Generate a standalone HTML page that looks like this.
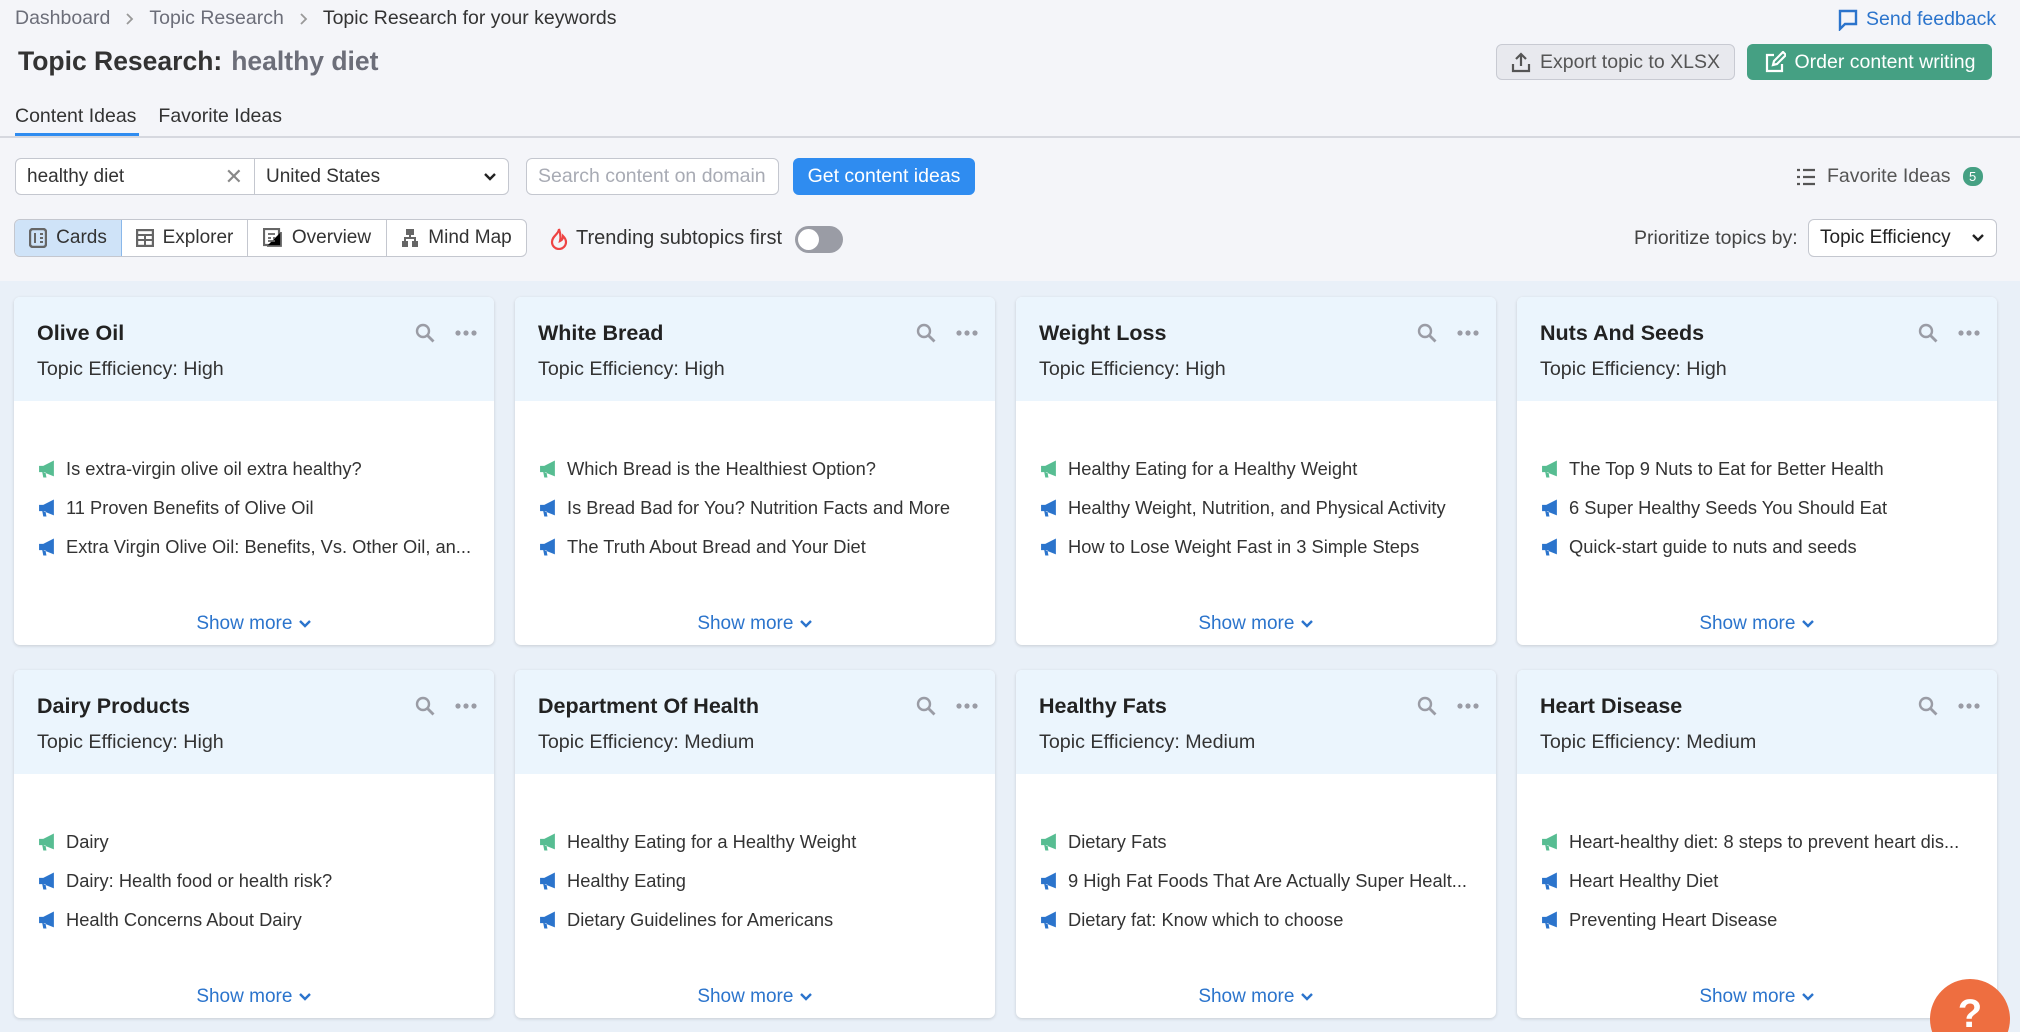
<!DOCTYPE html>
<html><head><meta charset="utf-8"><style>
*{box-sizing:border-box;margin:0;padding:0}
html,body{width:2020px;height:1032px;overflow:hidden}
body{background:#f4f5f9;font-family:"Liberation Sans",sans-serif;color:#333;position:relative}
.a{position:absolute}
.bc{top:7px;left:15px;font-size:19.5px;color:#6c6e79;white-space:nowrap;display:flex;align-items:center}
.bc b{font-weight:normal;color:#333}
.bc i{margin:0 15px;display:inline-flex}
h1{position:absolute;left:18px;top:46px;font-size:26.5px;font-weight:bold;color:#333;white-space:nowrap}
h1 span{color:#6c6e79;margin-left:9px}
.btn{position:absolute;border-radius:6px;font-size:19.5px;display:flex;align-items:center;justify-content:center;gap:9px}
.tabs{top:105px;left:15px;font-size:19.5px}
.line{top:136px;left:0;width:2020px;height:2px;background:#d6d8df}
.ul{top:133px;left:15px;width:124px;height:3px;background:#2f8cf0}
.inp{position:absolute;background:#fff;border:1px solid #c4c7cf;height:37px;top:158px;font-size:19px;display:flex;align-items:center;padding:0 11px}
.seg{position:absolute;top:219px;left:14px;height:38px;width:513px;border:1px solid #c4c7cf;border-radius:6px;background:#fff;display:flex;overflow:hidden;font-size:19px}
.seg div{display:flex;align-items:center;justify-content:center;gap:9px;border-right:1px solid #c4c7cf}
.seg div:last-child{border:none}
.band{top:281px;left:0;width:2020px;height:751px;background:#e9f0f8;overflow:hidden}
.card{position:absolute;width:480px;height:348px;background:#fff;border-radius:6px;box-shadow:0 1px 3px rgba(0,0,0,.15);overflow:hidden}
.hd{height:104px;background:#ebf5fd;position:relative;padding:24px 0 0 23px}
.hd h3{font-size:21.5px;font-weight:bold;color:#222}
.hd p{font-size:19.7px;margin-top:12px;color:#333}
.ic{position:absolute;top:26px;right:17px;display:flex;gap:20px;align-items:center}
.items{padding:48px 0 0 24px}
.it{display:flex;align-items:center;font-size:18.3px;color:#333;height:39px;white-space:nowrap}
.it svg{margin-right:10px;flex:none}
.sm{position:absolute;bottom:10px;left:0;width:100%;text-align:center;font-size:19px;color:#2b74cc}
</style></head><body>
<div class="a bc">Dashboard<i><svg width="9" height="14" viewBox="0 0 9 14"><path d="M2 2l5 5-5 5" fill="none" stroke="#999" stroke-width="1.8"/></svg></i>Topic Research<i><svg width="9" height="14" viewBox="0 0 9 14"><path d="M2 2l5 5-5 5" fill="none" stroke="#999" stroke-width="1.8"/></svg></i><b>Topic Research for your keywords</b></div>
<div class="a" style="top:8px;left:1838px;font-size:19.5px;color:#2b74cc;display:flex;align-items:center;gap:8px"><svg width="20" height="22" viewBox="0 0 20 22"><path d="M2 2h16v13H7l-5 5z" fill="none" stroke="#2b74cc" stroke-width="2.4"/></svg>Send feedback</div>
<h1>Topic Research:<span>healthy diet</span></h1>
<div class="btn" style="left:1496px;top:44px;width:239px;height:36px;background:#e8e9ee;border:1px solid #c8cad2;color:#555"><svg width="20" height="22" viewBox="0 0 20 22"><path d="M10 15V3M5 8l5-5 5 5M2 13v7h16v-7" fill="none" stroke="#555" stroke-width="2.2"/></svg>Export topic to XLSX</div>
<div class="btn" style="left:1747px;top:44px;width:245px;height:36px;background:#45a083;color:#fff"><svg width="22" height="22" viewBox="0 0 22 22"><path d="M10 4H3v16h15v-7M9 14l1-4 9-9 3 3-9 9z" fill="none" stroke="#fff" stroke-width="2.2"/></svg>Order content writing</div>
<div class="a tabs">Content Ideas<span style="margin-left:22px">Favorite Ideas</span></div>
<div class="a line"></div><div class="a ul"></div>
<div class="inp" style="left:15px;width:240px;border-radius:6px 0 0 6px;justify-content:space-between">healthy diet<span style="color:#888;font-size:22px">✕</span></div>
<div class="inp" style="left:254px;width:255px;border-radius:0 6px 6px 0;justify-content:space-between">United States<svg width="14" height="10" viewBox="0 0 14 10"><path d="M2 2l5 5 5-5" fill="none" stroke="#222" stroke-width="2.4"/></svg></div>
<div class="inp" style="left:526px;width:253px;border-radius:6px;color:#a8abb4;font-size:19.5px">Search content on domain</div>
<div class="btn" style="left:793px;top:158px;width:182px;height:37px;background:#2f8cf0;color:#fff">Get content ideas</div>
<div class="a" style="left:1797px;top:165px;font-size:19.5px;color:#555;display:flex;align-items:center;gap:12px"><svg width="18" height="18" viewBox="0 0 18 18"><path d="M0 2h3M6 2h12M0 9h3M6 9h12M0 16h3M6 16h12" stroke="#555" stroke-width="2.2"/></svg>Favorite Ideas<span style="background:#45a083;color:#fff;font-size:13px;border-radius:9px;width:20px;height:19px;display:inline-flex;align-items:center;justify-content:center">5</span></div>
<div class="seg">
<div style="width:107px;background:#cfe3f8;border-color:#8ab8ea"><svg width="18" height="20" viewBox="0 0 18 20"><rect x="1" y="1" width="16" height="18" rx="3" fill="none" stroke="#666" stroke-width="2.4"/><path d="M6 5v10M11 6h3M11 10h3M11 14h3" stroke="#666" stroke-width="2"/></svg>Cards</div>
<div style="width:126px"><svg width="18" height="18" viewBox="0 0 18 18"><rect x="1" y="1" width="16" height="16" fill="none" stroke="#666" stroke-width="2.4"/><path d="M1 6h16M1 11h16M9 6v11" stroke="#666" stroke-width="2"/></svg>Explorer</div>
<div style="width:139px"><svg width="20" height="20" viewBox="0 0 20 20"><rect x="1" y="1" width="15" height="16" fill="none" stroke="#666" stroke-width="2.2"/><path d="M4 18h14V4M5 6h7M5 10h3M10 10h2M5 13h7" stroke="#666" stroke-width="1.8"/></svg>Overview</div>
<div style="flex:1"><svg width="18" height="20" viewBox="0 0 18 20"><rect x="5" y="1" width="8" height="6" fill="#666"/><rect x="1" y="13" width="6" height="6" fill="#666"/><rect x="11" y="13" width="6" height="6" fill="#666"/><path d="M9 7v3M4 13v-3h10v3" fill="none" stroke="#666" stroke-width="2"/></svg>Mind Map</div>
</div>
<div class="a" style="left:550px;top:227px;font-size:20px;display:flex;align-items:center;gap:8px"><svg width="18" height="22" viewBox="0 0 18 22"><path d="M9 1c0 5-7 7-7 13a7 7 0 0014 0c0-3-2-5-3-6 0 3-1 4-3 5 1-4 0-9-1-12z" fill="none" stroke="#ee4444" stroke-width="2.2"/></svg>Trending subtopics first</div>
<div class="a" style="left:795px;top:226px;width:48px;height:27px;border-radius:14px;background:#9a9ca5"><span style="position:absolute;left:3px;top:3px;width:21px;height:21px;border-radius:50%;background:#fff"></span></div>
<div class="a" style="left:1634px;top:227px;font-size:19.5px;color:#444">Prioritize topics by:</div>
<div class="inp" style="left:1808px;top:219px;width:189px;height:38px;border-radius:6px;justify-content:space-between;color:#222">Topic Efficiency<svg width="14" height="10" viewBox="0 0 14 10"><path d="M2 2l5 5 5-5" fill="none" stroke="#222" stroke-width="2.4"/></svg></div>
<div class="a band"><div id="cards" style="position:absolute;left:0;top:-281px;width:2020px;height:1032px"></div>
<div class="a" style="left:1930px;top:698px;width:80px;height:80px;border-radius:50%;background:#ee6e40;color:#fff;font-size:40px;font-weight:bold;text-align:center;line-height:70px">?</div></div>
<script>
var d=[["Olive Oil","High",["Is extra-virgin olive oil extra healthy?","11 Proven Benefits of Olive Oil","Extra Virgin Olive Oil: Benefits, Vs. Other Oil, an..."]],
["White Bread","High",["Which Bread is the Healthiest Option?","Is Bread Bad for You? Nutrition Facts and More","The Truth About Bread and Your Diet"]],
["Weight Loss","High",["Healthy Eating for a Healthy Weight","Healthy Weight, Nutrition, and Physical Activity","How to Lose Weight Fast in 3 Simple Steps"]],
["Nuts And Seeds","High",["The Top 9 Nuts to Eat for Better Health","6 Super Healthy Seeds You Should Eat","Quick-start guide to nuts and seeds"]],
["Dairy Products","High",["Dairy","Dairy: Health food or health risk?","Health Concerns About Dairy"]],
["Department Of Health","Medium",["Healthy Eating for a Healthy Weight","Healthy Eating","Dietary Guidelines for Americans"]],
["Healthy Fats","Medium",["Dietary Fats","9 High Fat Foods That Are Actually Super Healt...","Dietary fat: Know which to choose"]],
["Heart Disease","Medium",["Heart-healthy diet: 8 steps to prevent heart dis...","Heart Healthy Diet","Preventing Heart Disease"]]];
function mg(c){return '<svg width="18" height="20" viewBox="0 0 17 18"><path d="M1 6h4l10-5v15L5 12H1z M4 12l1 5h3l-1-5z" fill="'+c+'"/></svg>';}
var h='';
d.forEach(function(c,i){var x=14+(i%4)*501,y=297+Math.floor(i/4)*373;
h+='<div class="card" style="left:'+x+'px;top:'+y+'px"><div class="hd"><h3>'+c[0]+'</h3><p>Topic Efficiency: '+c[1]+'</p><div class="ic"><svg width="20" height="20" viewBox="0 0 20 20"><circle cx="8" cy="8" r="6" fill="none" stroke="#9a9ca5" stroke-width="2.4"/><path d="M12.5 12.5l6 6" stroke="#9a9ca5" stroke-width="2.8"/></svg><svg width="22" height="6" viewBox="0 0 22 6"><circle cx="3" cy="3" r="2.6" fill="#9a9ca5"/><circle cx="11" cy="3" r="2.6" fill="#9a9ca5"/><circle cx="19" cy="3" r="2.6" fill="#9a9ca5"/></svg></div></div><div class="items">';
c[2].forEach(function(t,j){h+='<div class="it">'+mg(j==0?'#57bd92':'#2b74cc')+t+'</div>';});
h+='</div><div class="sm">Show more <svg width="14" height="10" viewBox="0 0 14 10"><path d="M2 2l5 5 5-5" fill="none" stroke="#2b74cc" stroke-width="2.4"/></svg></div></div>';});
document.getElementById('cards').innerHTML=h;
</script>
</body></html>
